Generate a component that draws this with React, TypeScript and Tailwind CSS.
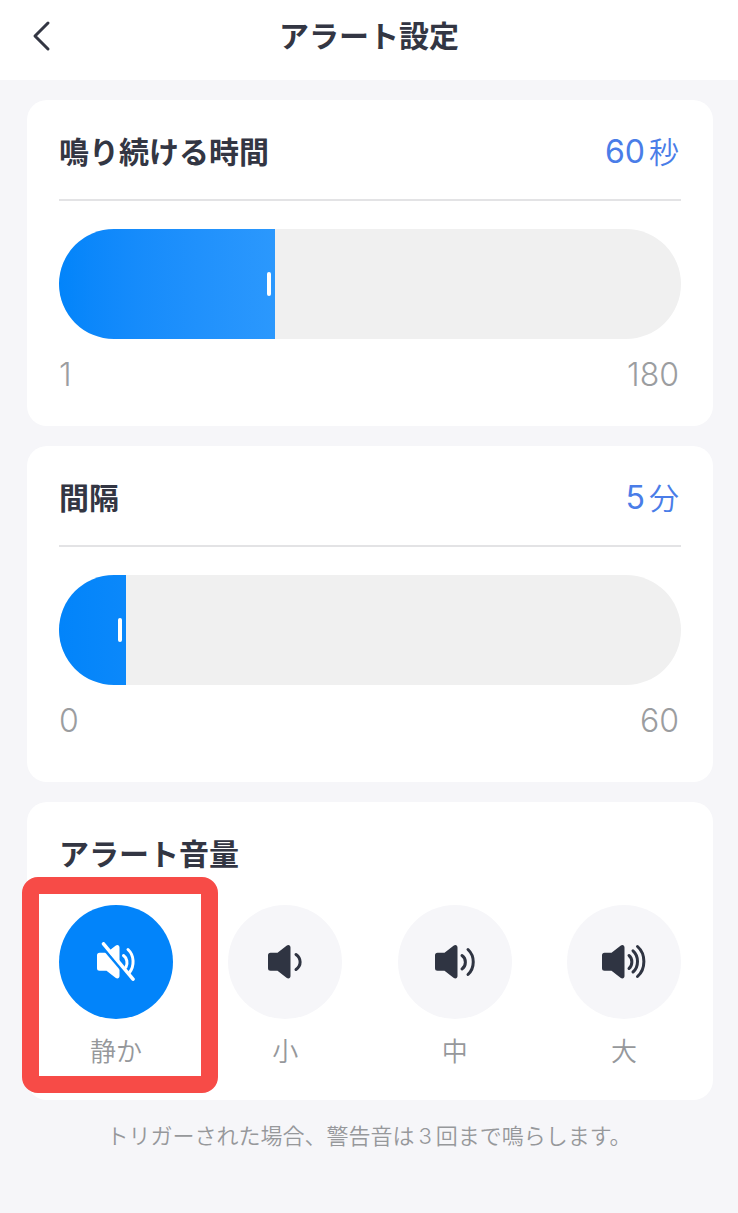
import React, { useState } from 'react';

const THUMB_WIDTH = 16;

interface SliderCardProps {
  id: string;
  title: string;
  unit: string;
  min: number;
  max: number;
  initialValue: number;
  gradient: string;
  className: string;
}

const SliderCard: React.FC<SliderCardProps> = ({
  id,
  title,
  unit,
  min,
  max,
  initialValue,
  gradient,
  className,
}) => {
  const [value, setValue] = useState(initialValue);
  const ratio = (value - min) / (max - min);

  return (
    <section className={`rounded-[20px] bg-white px-8 pt-8 ${className}`}>
      <div className="flex items-center justify-between border-b-2 border-[#e3e3e5] pb-[27px]">
        <label htmlFor={id} className="text-[30px] leading-10 font-bold">
          {title}
        </label>
        <output
          htmlFor={id}
          className="flex items-center gap-1 pr-0.5 leading-10 text-[#4a7de8]"
        >
          <span className="text-[32px] font-normal">{value}</span>
          <span className="text-[30px] font-[350]">{unit}</span>
        </output>
      </div>

      <div className="relative mt-7 h-[110px] overflow-hidden rounded-full bg-[#f0f0f0]">
        <div
          className={`flex h-full items-center justify-end bg-linear-to-r pr-1 ${gradient}`}
          style={{
            width: `calc(${ratio} * (100% - ${THUMB_WIDTH}px) + ${THUMB_WIDTH}px)`,
          }}
        >
          <span className="h-6 w-1 rounded-xs bg-white" />
        </div>
        <input
          id={id}
          type="range"
          min={min}
          max={max}
          value={value}
          onChange={(e) => setValue(Number(e.target.value))}
          className="absolute inset-0 h-full w-full cursor-pointer opacity-0"
        />
      </div>

      <div className="mt-4 flex justify-between pr-0.5 text-[32px] leading-10 font-light text-[#9b9da0]">
        <span>{min}</span>
        <span>{max}</span>
      </div>
    </section>
  );
};

const SPEAKER =
  'M2.500 10.700H9.500L18.500 3.700C20.500 2.200 22.500 3.200 22.500 5.500V34C22.500 36.300 20.500 37.300 18.500 35.800L9.500 28.700H2.500A2.500 2.500 0 0 1 0 26.200V13.200A2.500 2.500 0 0 1 2.500 10.700Z';

interface VolumeIconProps {
  waves: string[];
  width: number;
  className: string;
}

const VolumeIcon: React.FC<VolumeIconProps> = ({ waves, width, className }) => (
  <svg
    className={`h-10 ${className}`}
    viewBox={`0 0 ${width} 40`}
    fill="none"
    aria-hidden="true"
  >
    <path d={SPEAKER} fill="currentColor" />
    {waves.map((d) => (
      <path
        key={d}
        d={d}
        stroke="currentColor"
        strokeWidth="3"
        strokeLinecap="round"
      />
    ))}
  </svg>
);

const MutedIcon: React.FC = () => (
  <svg
    className="h-10 w-[38px]"
    viewBox="0 0 38 40"
    fill="none"
    aria-hidden="true"
  >
    <mask id="slash-gap" maskUnits="userSpaceOnUse" x="0" y="0" width="38" height="40">
      <path d="M0 0H38V40H0Z" fill="white" />
      <path d="M4 3.400L34.500 39.300" stroke="black" strokeWidth="3" />
    </mask>
    <g mask="url(#slash-gap)">
      <path d={SPEAKER} fill="currentColor" />
    </g>
    <path
      d="M26.500 13.500C30 16 31 21 29 25"
      stroke="currentColor"
      strokeWidth="3"
      strokeLinecap="round"
    />
    <path
      d="M31 7.500C37.500 13.500 37.500 24 32.500 30.500"
      stroke="currentColor"
      strokeWidth="3"
      strokeLinecap="round"
    />
    <path
      d="M6.500 1.800L36 37.200"
      stroke="currentColor"
      strokeWidth="3.500"
      strokeLinecap="round"
    />
  </svg>
);

interface VolumeOption {
  value: string;
  label: string;
  icon: React.ReactNode;
}

const volumeOptions: VolumeOption[] = [
  {
    value: 'silent',
    label: '静か',
    icon: <MutedIcon />,
  },
  {
    value: 'low',
    label: '小',
    icon: (
      <VolumeIcon
        className="w-[34px]"
        width={34}
        waves={['M28 12.500C33.500 16.500 33.500 23.500 28 27.500']}
      />
    ),
  },
  {
    value: 'middle',
    label: '中',
    icon: (
      <VolumeIcon
        className="w-10"
        width={40}
        waves={[
          'M27 13.500C31.500 16.500 31.500 24 27 27',
          'M33 7.500C40 14 40 26 33 32.500',
        ]}
      />
    ),
  },
  {
    value: 'high',
    label: '大',
    icon: (
      <VolumeIcon
        className="w-11"
        width={44}
        waves={[
          'M27 13.500C30.800 16.500 30.800 23.500 27 26.500',
          'M31 8.800C37 14 37 25 31 30',
          'M35.500 4.500C44 12 44 27 35.500 34.500',
        ]}
      />
    ),
  },
];

const VolumeCard: React.FC = () => {
  const [volume, setVolume] = useState('silent');

  return (
    <section className="rounded-[20px] bg-white px-8 pt-8 pb-[31px]">
      <h2 className="text-[30px] leading-10 font-bold">アラート音量</h2>
      <div
        role="radiogroup"
        aria-label="アラート音量"
        className="mt-[31px] flex justify-between"
      >
        {volumeOptions.map((option, index) => (
          <label
            key={option.value}
            className="relative flex cursor-pointer flex-col items-center"
          >
            <input
              type="radio"
              name="volume"
              value={option.value}
              checked={volume === option.value}
              onChange={() => setVolume(option.value)}
              className="sr-only"
            />
            <span
              className={`flex size-[114px] items-center justify-center rounded-full ${
                volume === option.value
                  ? 'bg-[#0284fa] text-white'
                  : 'bg-[#f6f6f9] text-[#2f3442]'
              }`}
            >
              {option.icon}
            </span>
            <span className="mt-4 text-[26px] leading-[34px] font-[350] text-[#96989b]">
              {option.label}
            </span>
            {/* highlight frame around the first option */}
            {index === 0 && (
              <span className="pointer-events-none absolute -top-7 -right-[45px] -bottom-6 -left-[37px] rounded-2xl border-[17px] border-[#f74b47]" />
            )}
          </label>
        ))}
      </div>
    </section>
  );
};

const App: React.FC = () => {
  return (
    <div
      lang="ja"
      className="min-h-screen bg-[#f6f6f9] font-[Inter,'Noto_Sans_CJK_JP',sans-serif] text-[#333643]"
    >
      <header className="grid h-20 grid-cols-[1fr_auto_1fr] items-center bg-white px-6 pb-2">
        <button
          type="button"
          aria-label="戻る"
          className="flex size-9 cursor-pointer items-center justify-center"
        >
          <svg
            className="h-8 w-5"
            viewBox="0 0 20 32"
            fill="none"
            stroke="currentColor"
            strokeWidth="3"
            strokeLinecap="round"
            strokeLinejoin="round"
            aria-hidden="true"
          >
            <path d="M16 3L3 16L16 29" />
          </svg>
        </button>
        <h1 className="text-[30px] leading-10 font-bold">アラート設定</h1>
      </header>

      <main className="flex flex-col gap-5 pt-5 pr-[25px] pl-[27px]">
        <SliderCard
          id="duration"
          title="鳴り続ける時間"
          unit="秒"
          min={1}
          max={180}
          initialValue={60}
          gradient="from-[#0284fa] to-[#2b98fd]"
          className="pb-[31px]"
        />
        <SliderCard
          id="interval"
          title="間隔"
          unit="分"
          min={0}
          max={60}
          initialValue={5}
          gradient="from-[#0284fa] to-[#0b88fa]"
          className="pb-[41px]"
        />
        <VolumeCard />
      </main>

      <p className="mt-4 text-center text-[22px] leading-10 font-[350] text-[#96989b]">
        トリガーされた場合、警告音は<span className="mx-1">3</span>
        回まで鳴らします。
      </p>
    </div>
  );
};

export default App;
